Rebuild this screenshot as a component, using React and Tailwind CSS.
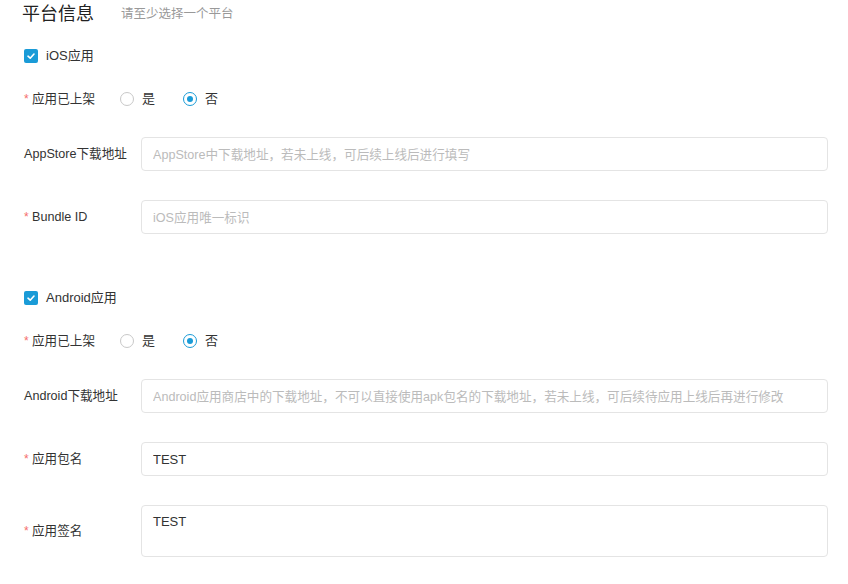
import { useState } from 'react'

const FONT = { fontFamily: '"Liberation Sans", "Noto Sans CJK SC", sans-serif' }

function Check({ label }) {
  return (
    <label className="flex items-center h-[20px] gap-[8px] text-[13px] text-[#333]">
      <span className="w-[14px] h-[14px] rounded-[2px] bg-[#1a9bd7] flex items-center justify-center">
        <svg width="10" height="10" viewBox="0 0 10 10" fill="none">
          <path d="M2 5.2 L4.2 7.2 L8 3" stroke="#fff" strokeWidth="1.6" strokeLinecap="round" strokeLinejoin="round" />
        </svg>
      </span>
      {label}
    </label>
  )
}

function Label({ required, width, children }) {
  return (
    <div className={`${width} shrink-0 flex items-center text-[12.6px] text-[#333]`}>
      {required ? <span className="text-[#f56c6c] w-[8px] text-[12px] leading-none">*</span> : null}
      <span>{children}</span>
    </div>
  )
}

function Radio({ checked, label }) {
  return (
    <span className="flex items-center gap-[8px] text-[13px] text-[#333]">
      <span
        className={`w-[14px] h-[14px] rounded-full border flex items-center justify-center ${
          checked ? 'border-[#1a9bd7]' : 'border-[#c8c8c8]'
        }`}
      >
        {checked ? <span className="w-[6px] h-[6px] rounded-full bg-[#1a9bd7]" /> : null}
      </span>
      {label}
    </span>
  )
}

function OnShelf() {
  const [v] = useState('no')
  return (
    <div className="flex items-center h-[20px] mt-[23px]">
      <Label required width="w-[96px]">应用已上架</Label>
      <div className="flex items-center gap-[28px]">
        <Radio checked={v === 'yes'} label="是" />
        <Radio checked={v === 'no'} label="否" />
      </div>
    </div>
  )
}

function Field({ label, required, placeholder, value, area, className = '' }) {
  return (
    <div className={`flex items-center ${className}`}>
      <Label required={required} width="w-[117px]">{label}</Label>
      {area ? (
        <textarea
          defaultValue={value}
          placeholder={placeholder}
          className="flex-1 h-[52px] resize-none border border-[#e4e4e4] rounded-[4px] px-[11px] pt-[7px] text-[13px] text-[#333] placeholder:text-[#bbb] placeholder:text-[12.6px] outline-none leading-[18px]"
          style={FONT}
        />
      ) : (
        <input
          defaultValue={value}
          placeholder={placeholder}
          className="flex-1 h-[34px] border border-[#e4e4e4] rounded-[4px] px-[11px] text-[13px] text-[#333] placeholder:text-[#bbb] placeholder:text-[12.6px] outline-none"
          style={FONT}
        />
      )}
    </div>
  )
}

export default function App() {
  return (
    <div className="bg-white min-h-[584px] pl-[24px] pr-[20px]" style={FONT}>
      {/* header */}
      <div className="flex items-center h-[28px] -ml-[2px]">
        <span className="text-[18px] text-[#222]">平台信息</span>
        <span className="ml-[27px] text-[12.5px] text-[#999]">请至少选择一个平台</span>
      </div>

      {/* iOS */}
      <div className="mt-[18px]">
        <Check label="iOS应用" />
      </div>
      <OnShelf />
      <Field className="mt-[28px]" label="AppStore下载地址" placeholder="AppStore中下载地址，若未上线，可后续上线后进行填写" />
      <Field className="mt-[29px]" required label="Bundle ID" placeholder="iOS应用唯一标识" />

      {/* Android */}
      <div className="mt-[54px]">
        <Check label="Android应用" />
      </div>
      <OnShelf />
      <Field
        className="mt-[28px]"
        label="Android下载地址"
        placeholder="Android应用商店中的下载地址，不可以直接使用apk包名的下载地址，若未上线，可后续待应用上线后再进行修改"
      />
      <Field className="mt-[29px]" required label="应用包名" value="TEST" />
      <Field className="mt-[29px]" required label="应用签名" value="TEST" area />
    </div>
  )
}
